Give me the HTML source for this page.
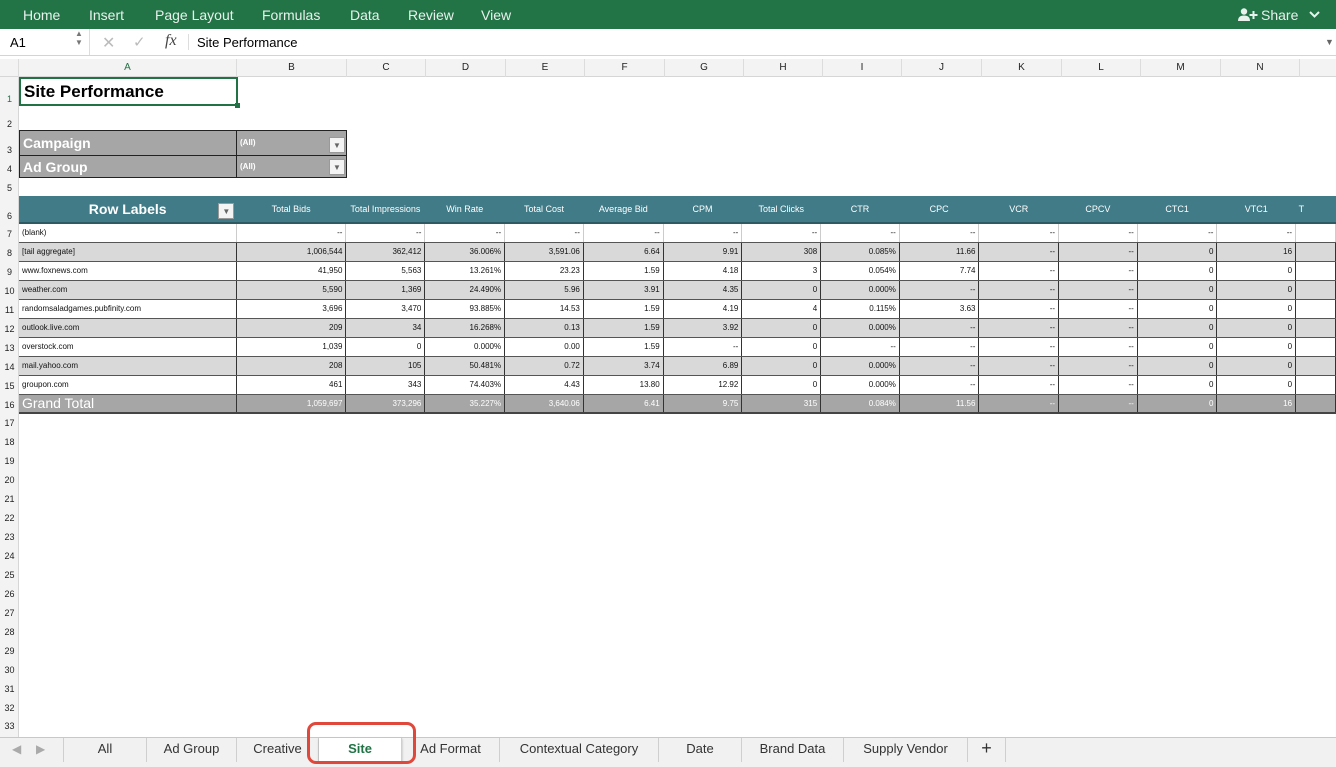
<!DOCTYPE html>
<html><head><meta charset="utf-8"><style>
*{box-sizing:border-box;margin:0;padding:0}
body{width:1336px;height:767px;overflow:hidden;background:#fff;font-family:"Liberation Sans",sans-serif;position:relative}
.ab{position:absolute}
#rib{left:0;top:0;width:1336px;height:29px;background:#227447;color:#e8f1ec;font-size:14px}
#rib span{position:absolute;top:7px}
#fb{left:0;top:29px;width:1336px;height:27px;background:#fff;border-bottom:1px solid #d4d4d4;font-size:13px}
#ch{left:0;top:59px;width:1336px;height:18px;background:#f3f3f3;border-bottom:1px solid #d6d6d6;font-size:10px;color:#222}
#ch div{position:absolute;top:0;height:18px;line-height:18px;text-align:center;border-right:1px solid #dcdcdc}
#rh{left:0;top:77px;width:19px;height:660px;background:#f3f3f3;border-right:1px solid #d6d6d6;font-size:9px;color:#222}
#rh div{position:absolute;left:0;width:19px;text-align:center}
table{border-collapse:collapse;table-layout:fixed;font-family:"Liberation Sans",sans-serif}
#pv{position:absolute;left:19px;top:196px}
#pv td{height:19px;font-size:8px;text-align:right;padding:0 3px;border-right:1px solid #333;border-bottom:1px solid #555;white-space:nowrap;overflow:hidden;color:#111}
#pv td.l{text-align:left}
#pv tr.h td{height:27px;background:#417b87;color:#fff;text-align:center;font-size:9px;border-right:none;border-bottom:2px solid #2d5a63}
#pv tr.g td{background:#d9d9d9}
#pv tr.t td{background:#a6a6a6;color:#fff;border-bottom:2px solid #444}
#pv tr.b td{border-right:1px solid #ccc}
#tabs{left:0;top:737px;width:1336px;height:30px;background:#f1f1f1;border-top:1px solid #c8c8c8;font-size:13px;color:#333}
#tabs div{position:absolute;top:0;height:24px;line-height:21px;text-align:center;border-right:1px solid #cfcfcf}
</style></head><body>
<div id="rib" class="ab">
<span style="left:23px">Home</span><span style="left:89px">Insert</span><span style="left:155px">Page Layout</span><span style="left:262px">Formulas</span><span style="left:350px">Data</span><span style="left:408px">Review</span><span style="left:481px">View</span>
<svg class="ab" style="left:1238px;top:8px" width="20" height="13" viewBox="0 0 20 13"><circle cx="6" cy="3.5" r="3.2" fill="#e8f1ec"/><path d="M0 13 Q0 7.5 6 7.5 Q12 7.5 12 13Z" fill="#e8f1ec"/><path d="M15.5 3v8M11.5 7h8" stroke="#e8f1ec" stroke-width="2"/></svg>
<span style="left:1261px">Share</span>
<svg class="ab" style="left:1309px;top:11px" width="11" height="7" viewBox="0 0 11 7"><path d="M1 1l4.5 4.5L10 1" stroke="#e8f1ec" stroke-width="2" fill="none"/></svg>
</div>
<div id="fb" class="ab">
<span class="ab" style="left:10px;top:6px">A1</span>
<span class="ab" style="left:75px;top:0px;font-size:8px;color:#777;line-height:9px">▲<br>▼</span>
<div class="ab" style="left:89px;top:0;width:1px;height:26px;background:#ddd"></div>
<span class="ab" style="left:102px;top:4px;color:#bbb;font-size:16px">✕</span>
<span class="ab" style="left:133px;top:4px;color:#bbb;font-size:15px">✓</span>
<span class="ab" style="left:165px;top:3px;font-family:'Liberation Serif',serif;font-style:italic;font-size:16px;color:#444">fx</span>
<div class="ab" style="left:188px;top:5px;width:1px;height:16px;background:#ddd"></div>
<span class="ab" style="left:197px;top:6px">Site Performance</span>
<span class="ab" style="left:1325px;top:8px;font-size:9px;color:#666">▼</span>
</div>
<div id="ch" class="ab">
<div style="left:0;width:19px"></div>
<div style="left:19px;width:218px;color:#217346">A</div>
<div style="left:237px;width:110px">B</div><div style="left:347px;width:79px">C</div><div style="left:426px;width:80px">D</div><div style="left:506px;width:79px">E</div><div style="left:585px;width:80px">F</div><div style="left:665px;width:79px">G</div><div style="left:744px;width:79px">H</div><div style="left:823px;width:79px">I</div><div style="left:902px;width:80px">J</div><div style="left:982px;width:80px">K</div><div style="left:1062px;width:79px">L</div><div style="left:1141px;width:80px">M</div><div style="left:1221px;width:79px">N</div><div style="left:1300px;width:40px"></div>
</div>
<div id="rh" class="ab">
<div style="top:17px;color:#217346">1</div><div style="top:42px">2</div><div style="top:68px">3</div><div style="top:87px">4</div><div style="top:106px">5</div><div style="top:134px">6</div>
<div style="top:152px">7</div><div style="top:171px">8</div><div style="top:190px">9</div><div style="top:209px">10</div><div style="top:228px">11</div><div style="top:247px">12</div><div style="top:266px">13</div><div style="top:285px">14</div><div style="top:304px">15</div><div style="top:323px">16</div><div style="top:341px">17</div><div style="top:360px">18</div><div style="top:379px">19</div><div style="top:398px">20</div><div style="top:417px">21</div><div style="top:436px">22</div><div style="top:455px">23</div><div style="top:474px">24</div><div style="top:493px">25</div><div style="top:512px">26</div><div style="top:531px">27</div><div style="top:550px">28</div><div style="top:569px">29</div><div style="top:588px">30</div><div style="top:607px">31</div><div style="top:626px">32</div><div style="top:644px">33</div>
</div>
<div class="ab" style="left:19px;top:77px;width:219px;height:29px;border:2px solid #217346"></div>
<div class="ab" style="left:235px;top:103px;width:5px;height:5px;background:#217346"></div>
<div class="ab" style="left:24px;top:82px;font-size:17px;font-weight:bold">Site Performance</div>
<div class="ab" style="left:19px;top:130px;width:328px;height:48px;background:#a6a6a6;border:1px solid #222"></div>
<div class="ab" style="left:19px;top:155px;width:328px;height:1px;background:#222"></div>
<div class="ab" style="left:236px;top:130px;width:1px;height:48px;background:#222"></div>
<div class="ab" style="left:23px;top:135px;color:#fff;font-weight:bold;font-size:14px">Campaign</div>
<div class="ab" style="left:23px;top:159px;color:#fff;font-weight:bold;font-size:14px">Ad Group</div>
<div class="ab" style="left:240px;top:138px;color:#fff;font-weight:bold;font-size:8px">(All)</div>
<div class="ab" style="left:240px;top:162px;color:#fff;font-weight:bold;font-size:8px">(All)</div>
<div class="ab" style="left:329px;top:137px;width:16px;height:16px;background:#f4f4f4;border:1px solid #999;font-size:8px;color:#666;text-align:center;line-height:15px">▼</div>
<div class="ab" style="left:329px;top:159px;width:16px;height:16px;background:#f4f4f4;border:1px solid #999;font-size:8px;color:#666;text-align:center;line-height:15px">▼</div>
<table id="pv">
<colgroup><col style="width:218px"><col style="width:110px"><col style="width:79px"><col style="width:80px"><col style="width:79px"><col style="width:80px"><col style="width:79px"><col style="width:79px"><col style="width:79px"><col style="width:80px"><col style="width:80px"><col style="width:79px"><col style="width:80px"><col style="width:79px"><col style="width:40px"></colgroup>
<tr class="h"><td style="font-size:14px;font-weight:bold;position:relative">Row Labels<span style="position:absolute;right:2px;top:7px;width:16px;height:16px;background:#f4f4f4;border:1px solid #999;font-size:8px;color:#666;line-height:15px">▼</span></td><td>Total Bids</td><td>Total Impressions</td><td>Win Rate</td><td>Total Cost</td><td>Average Bid</td><td>CPM</td><td>Total Clicks</td><td>CTR</td><td>CPC</td><td>VCR</td><td>CPCV</td><td>CTC1</td><td>VTC1</td><td style="text-align:left">T</td></tr>
<tr class="b"><td class="l">(blank)</td><td>--</td><td>--</td><td>--</td><td>--</td><td>--</td><td>--</td><td>--</td><td>--</td><td>--</td><td>--</td><td>--</td><td>--</td><td>--</td><td></td></tr>
<tr class="g"><td class="l">[tail aggregate]</td><td>1,006,544</td><td>362,412</td><td>36.006%</td><td>3,591.06</td><td>6.64</td><td>9.91</td><td>308</td><td>0.085%</td><td>11.66</td><td>--</td><td>--</td><td>0</td><td>16</td><td></td></tr>
<tr><td class="l">www.foxnews.com</td><td>41,950</td><td>5,563</td><td>13.261%</td><td>23.23</td><td>1.59</td><td>4.18</td><td>3</td><td>0.054%</td><td>7.74</td><td>--</td><td>--</td><td>0</td><td>0</td><td></td></tr>
<tr class="g"><td class="l">weather.com</td><td>5,590</td><td>1,369</td><td>24.490%</td><td>5.96</td><td>3.91</td><td>4.35</td><td>0</td><td>0.000%</td><td>--</td><td>--</td><td>--</td><td>0</td><td>0</td><td></td></tr>
<tr><td class="l">randomsaladgames.pubfinity.com</td><td>3,696</td><td>3,470</td><td>93.885%</td><td>14.53</td><td>1.59</td><td>4.19</td><td>4</td><td>0.115%</td><td>3.63</td><td>--</td><td>--</td><td>0</td><td>0</td><td></td></tr>
<tr class="g"><td class="l">outlook.live.com</td><td>209</td><td>34</td><td>16.268%</td><td>0.13</td><td>1.59</td><td>3.92</td><td>0</td><td>0.000%</td><td>--</td><td>--</td><td>--</td><td>0</td><td>0</td><td></td></tr>
<tr><td class="l">overstock.com</td><td>1,039</td><td>0</td><td>0.000%</td><td>0.00</td><td>1.59</td><td>--</td><td>0</td><td>--</td><td>--</td><td>--</td><td>--</td><td>0</td><td>0</td><td></td></tr>
<tr class="g"><td class="l">mail.yahoo.com</td><td>208</td><td>105</td><td>50.481%</td><td>0.72</td><td>3.74</td><td>6.89</td><td>0</td><td>0.000%</td><td>--</td><td>--</td><td>--</td><td>0</td><td>0</td><td></td></tr>
<tr><td class="l">groupon.com</td><td>461</td><td>343</td><td>74.403%</td><td>4.43</td><td>13.80</td><td>12.92</td><td>0</td><td>0.000%</td><td>--</td><td>--</td><td>--</td><td>0</td><td>0</td><td></td></tr>
<tr class="t"><td class="l" style="font-size:14px">Grand Total</td><td>1,059,697</td><td>373,296</td><td>35.227%</td><td>3,640.06</td><td>6.41</td><td>9.75</td><td>315</td><td>0.084%</td><td>11.56</td><td>--</td><td>--</td><td>0</td><td>16</td><td></td></tr>
</table>
<div id="tabs" class="ab">
<span class="ab" style="left:12px;top:4px;color:#aaa;font-size:12px">◀</span><span class="ab" style="left:36px;top:4px;color:#aaa;font-size:12px">▶</span>
<div style="left:63px;width:84px;border-left:1px solid #cfcfcf">All</div>
<div style="left:147px;width:90px">Ad Group</div>
<div style="left:237px;width:82px">Creative</div>
<div style="left:319px;width:83px;background:#fff;color:#217346;font-weight:bold;box-shadow:0 1px 2px #aaa">Site</div>
<div style="left:402px;width:98px">Ad Format</div>
<div style="left:500px;width:159px">Contextual Category</div>
<div style="left:659px;width:83px">Date</div>
<div style="left:742px;width:102px">Brand Data</div>
<div style="left:844px;width:124px">Supply Vendor</div>
<div style="left:968px;width:38px;font-size:18px">+</div>
</div>
<div class="ab" style="left:307px;top:722px;width:109px;height:42px;border:3px solid #e0483b;border-radius:9px"></div>
</body></html>
